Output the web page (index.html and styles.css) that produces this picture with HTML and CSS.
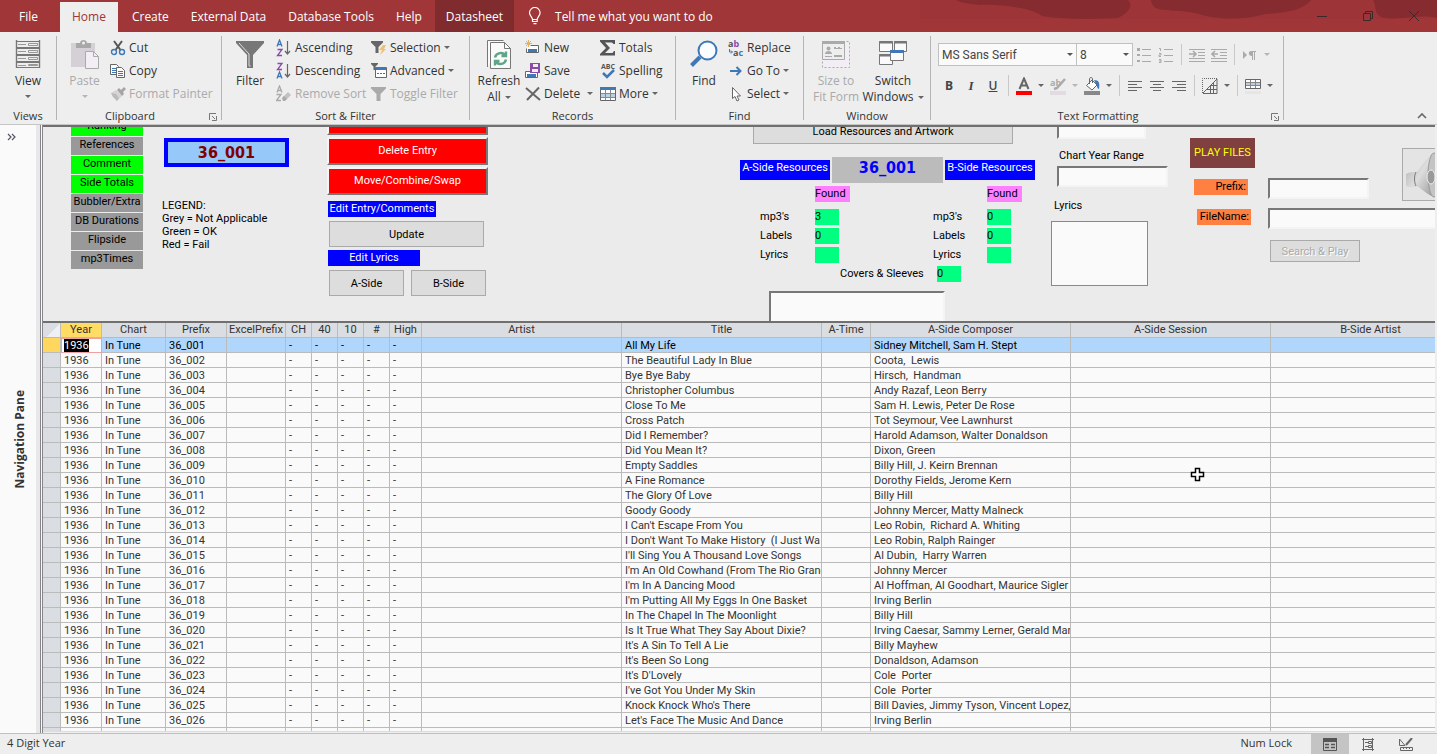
FILE: index.html
```html
<!DOCTYPE html>
<html lang="en">
<head>
<meta charset="UTF-8" />
<meta name="viewport" content="width=device-width, initial-scale=1" />
<title>Database - In Tune</title>
<link rel="stylesheet" href="styles.css">
</head>
<body>

<header class="titlebar">
  <svg class="swirls" width="517" height="32" viewBox="0 0 517 32">
    <rect width="517" height="19" fill="#98323a" opacity=".45"/>
    <g fill="#862b2f">
      <path d="M36 0h172c6 6 0 13-10 18-20 1-50 2-76-2C112 8 80 4 60 5 50 4 42 3 36 0z"/>
      <path d="M231 0h160c-6 8-20 13-46 14-20 6-48 6-66 0-16-4-20-2-32-4-12 0-16-5-16-10z"/>
      <path d="M453 0h64v18c-16-4-34 2-52 0-12-2-8-12-12-18z"/>
    </g>
  </svg>
  <nav class="tabs">
    <a href="#" class="tab file">File</a>
    <a href="#" class="tab active">Home</a>
    <a href="#" class="tab">Create</a>
    <a href="#" class="tab">External Data</a>
    <a href="#" class="tab">Database Tools</a>
    <a href="#" class="tab">Help</a>
    <a href="#" class="tab context">Datasheet</a>
  </nav>
  <button class="tellme">
    <svg width="14" height="18" viewBox="0 0 14 18" fill="none" stroke="#fff" stroke-width="1.2"><path d="M4.5 12.5C4.500 10 1.500 9 1.500 5.800a5.300 5.300 0 0 1 10.600 0C12.100 9 9.200 10 9.200 12.500zM4.500 12.500v2h4.700v-2M5.500 16.700h3"/></svg>
    Tell me what you want to do
  </button>
  <div class="winbtns">
    <button aria-label="Minimize"><svg width="12" height="12" viewBox="0 0 12 12"><path d="M1 6.500h10" stroke="#3a2a2b"/></svg></button>
    <button aria-label="Restore"><svg width="12" height="12" viewBox="0 0 12 12" fill="none" stroke="#3a2a2b"><path d="M1.500 3.500h7v7h-7zM3.500 3.500v-2h7v7h-2"/></svg></button>
    <button aria-label="Close"><svg width="12" height="12" viewBox="0 0 12 12"><path d="M1 1l10 10M11 1L1 11" stroke="#3a2a2b"/></svg></button>
  </div>
</header>

<section class="ribbon">
  <div class="group views">
    <div class="tools">
      <button class="big">
        <svg width="26" height="32" viewBox="0 0 26 32" fill="none" stroke="#777">
          <path d="M1.500 1v28M24.500 1v28" stroke-width="1.400"/>
          <path d="M1 2.500h24M1 8.500h24M1 9.500h24M1 15.500h24M1 16.500h24M1 22.500h24M1 23.500h24M1 28.500h24"/>
          <path d="M3 5.500h8M3 12.500h8M3 19.500h8M3 26.500h8M13.500 4.500h9v2h-9zM13.500 11.500h9v2h-9zM13.500 18.500h9v2h-9zM13.500 25.500h9v1h-9z" stroke="#999"/>
        </svg>
        <span>View</span><i class="caret"></i>
      </button>
    </div>
    <div class="caption">Views</div>
  </div>

  <div class="group clipboard">
    <div class="tools">
      <button class="big" disabled>
        <svg width="30" height="32" viewBox="0 0 30 32">
          <path d="M1 4h24v24H1z" fill="#d5d0d5"/>
          <path d="M6 4h4c0-4 7-4 7 0h4v5H6z" fill="#a8a8a8"/><circle cx="13.500" cy="4" r="1.500" fill="#eee"/>
          <path d="M15.500 12.500h8l5 5v12h-13z" fill="#f3eef5" stroke="#aaa"/><path d="M23.500 12.500v5h5" fill="none" stroke="#aaa"/>
        </svg>
        <span>Paste</span><i class="caret"></i>
      </button>
      <div class="stack">
        <button class="small">
          <svg width="16" height="16" viewBox="0 0 16 16" fill="none"><path d="M4 1l6.500 9M12 1L5.500 10" stroke="#555" stroke-width="2"/><circle cx="4" cy="12" r="2.500" stroke="#3f78b5" stroke-width="1.400"/><circle cx="12" cy="12" r="2.500" stroke="#3f78b5" stroke-width="1.400"/></svg>
          Cut
        </button>
        <button class="small">
          <svg width="16" height="16" viewBox="0 0 16 16" fill="#fafafa" stroke="#666"><path d="M.5 1.500h6l2 2v8h-8z"/><path d="M2 5.500h4M2 7.500h4M2 9.500h4" stroke="#3f78b5"/><path d="M6.500 4.500h5l3 3v7h-8z"/><path d="M8 8.500h5M8 10.500h5M8 12.500h5" stroke="#3f78b5"/></svg>
          Copy
        </button>
        <button class="small" disabled>
          <svg width="16" height="16" viewBox="0 0 16 16"><path d="M1 7l5-3 6 6-5 5z" fill="#d8d2d8"/><path d="M1 7l5 1 3 4-2 3-3-3-1-1z" fill="#bbb"/><path d="M7 4l2-2 2 2 3-3 2 2-3 3 1 2-2 2z" fill="#a5a5a5"/></svg>
          Format Painter
        </button>
      </div>
    </div>
    <div class="caption has-launcher">Clipboard <svg class="launcher" width="8" height="8" viewBox="0 0 8 8" fill="none" stroke="#777"><path d="M.5 7V.5H7M3 3l3 3M7.500 3v4.500H3"/></svg></div>
  </div>

  <div class="group sort">
    <div class="tools">
      <button class="big">
        <svg width="28" height="32" viewBox="0 0 28 32"><path d="M0 2h28v2L17 16v13h-6V16L0 4z" fill="#777"/><path d="M3 4l10 11v12h1.500" fill="none" stroke="#ddd"/></svg>
        <span>Filter</span>
      </button>
      <div class="stack wide">
        <button class="small">
          <svg width="16" height="18" viewBox="0 0 16 18" fill="none"><path d="M1 7.500L3.500 1 6 7.500M2 5.500h3" stroke="#3f78b5" stroke-width="1.300"/><path d="M1.500 10.500H6L1.500 16.500H6" stroke="#8b4aa8" stroke-width="1.300"/><path d="M11.500 2v12M9 12l2.500 3 2.500-3" stroke="#666" stroke-width="1.200"/></svg>
          Ascending
        </button>
        <button class="small">
          <svg width="16" height="18" viewBox="0 0 16 18" fill="none"><path d="M1 16.500L3.500 10 6 16.500M2 14.500h3" stroke="#3f78b5" stroke-width="1.300"/><path d="M1.500 1.500H6L1.500 7.500H6" stroke="#8b4aa8" stroke-width="1.300"/><path d="M11.500 2v12M9 12l2.500 3 2.500-3" stroke="#666" stroke-width="1.200"/></svg>
          Descending
        </button>
        <button class="small" disabled>
          <svg width="16" height="18" viewBox="0 0 16 18" fill="none"><path d="M1 7.500L3.500 1 6 7.500M2 5.500h3M.5 9.500H5L.5 15.500H5" stroke="#aaa" stroke-width="1.300"/><path d="M7 12l5-5 3 3-5 5H8z" fill="#c5c0c5"/><path d="M6 13l2-2 3 3-2 2H7z" fill="#aaa"/></svg>
          Remove Sort
        </button>
      </div>
      <div class="stack">
        <button class="small">
          <svg width="16" height="16" viewBox="0 0 16 16"><path d="M0 1h12v1.500L7.500 7v6h-3V7L0 2.500z" fill="#666"/><path d="M12 5h3l-2 4h2l-6 6 2-5H8z" fill="#f0c070"/></svg>
          Selection<i class="caret"></i>
        </button>
        <button class="small">
          <svg width="16" height="16" viewBox="0 0 16 16"><path d="M4.500 4.500h11v10h-11z" fill="#fff" stroke="#666"/><path d="M5 4h10v3H5z" fill="#3f78b5"/><path d="M6 10.500h2M9 10.500h2M12 10.500h2" stroke="#666"/><path d="M0 0h7v1L4.500 3.500V7h-2V3.500L0 1z" fill="#666"/></svg>
          Advanced<i class="caret"></i>
        </button>
        <button class="small" disabled>
          <svg width="16" height="16" viewBox="0 0 16 16"><path d="M0 1h15v1.500L9.500 8v7h-4V8L0 2.500z" fill="#aaa"/></svg>
          Toggle Filter
        </button>
      </div>
    </div>
    <div class="caption">Sort &amp; Filter</div>
  </div>

  <div class="group records">
    <div class="tools">
      <button class="big">
        <svg width="26" height="32" viewBox="0 0 26 32" fill="#fafafa" stroke="#777"><path d="M1.500 28V1.500h16"/><path d="M4.500 3.500h14l6 6v20h-20z"/><path d="M18.500 3.500v6h6" fill="none"/><path d="M9 18.500c1-5 8-6 10-2M20 12.500v4.500h-4.500M20 20.500c-1 5-8 6-10 2M9 26.500V22h4.500" fill="none" stroke="#5fa588" stroke-width="2.400"/></svg>
        <span>Refresh</span><span>All<i class="caret"></i></span>
      </button>
      <div class="stack mid">
        <button class="small">
          <svg width="16" height="16" viewBox="0 0 16 16" fill="none"><path d="M5.500 5.500h8v7h-12v-4" stroke="#666" fill="#fff"/><path d="M3 9h9v3H3z" fill="#3f78b5"/><path d="M3.500 0v7M0 3.500h7M1 1l5 5M6 1L1 6" stroke="#e8b060"/></svg>
          New
        </button>
        <button class="small">
          <svg width="16" height="16" viewBox="0 0 16 16" fill="none"><path d="M.5 8.500h12v6H.5z" fill="#fff" stroke="#666"/><path d="M2 11h9v3H2z" fill="#3f78b5"/><path d="M5 0h10v10H5z" fill="#8b4aa8"/><path d="M8 1h5v3H8zM7 6h6v3H7z" fill="#eee"/></svg>
          Save
        </button>
        <button class="small">
          <svg width="16" height="16" viewBox="0 0 16 16"><path d="M1 2l14 12M14 1.500L2 14" stroke="#666" stroke-width="2"/></svg>
          Delete<i class="caret far"></i>
        </button>
      </div>
      <div class="stack">
        <button class="small">
          <svg width="16" height="16" viewBox="0 0 16 16"><path d="M0 0h15v4h-1.500L12 2.500H5L10 8l-5 5h7.500L14 11h1v4.500H0V14l6-6L0 1.500z" fill="#555"/></svg>
          Totals
        </button>
        <button class="small">
          <svg width="16" height="18" viewBox="0 0 16 18" fill="none"><text x="1" y="7" class="abc">ABC</text><path d="M3 11l4 4 7-7" stroke="#3f78b5" stroke-width="2.500"/></svg>
          Spelling
        </button>
        <button class="small">
          <svg width="16" height="16" viewBox="0 0 16 16"><path d="M.5 1.500h15v13H.5z" fill="#fff" stroke="#666"/><path d="M0 1h16v3H0z" fill="#3f78b5"/><path d="M1 8h14v3H1z" fill="#b8cfe6"/><path d="M5.500 4v10M10.500 4v10M1 7.500h14M1 11.500h14" stroke="#888"/></svg>
          More<i class="caret"></i>
        </button>
      </div>
    </div>
    <div class="caption">Records</div>
  </div>

  <div class="group find">
    <div class="tools">
      <button class="big">
        <svg width="28" height="32" viewBox="0 0 28 32" fill="none"><path d="M1.500 26.500L10 18" stroke="#3f78b5" stroke-width="4"/><circle cx="17.500" cy="11.500" r="9" fill="#fafcff" stroke="#3f78b5" stroke-width="2"/></svg>
        <span>Find</span>
      </button>
      <div class="stack">
        <button class="small">
          <svg width="16" height="20" viewBox="0 0 16 20"><text x="0" y="9" class="abc big-abc">a<tspan fill="#8b4aa8">b</tspan></text><text x="5" y="18" class="abc big-abc">a<tspan fill="#3f78b5">c</tspan></text><path d="M1.500 11v3H4M3 12.500L4.500 14 3 15.500" fill="none" stroke="#3f78b5"/></svg>
          Replace
        </button>
        <button class="small">
          <svg width="16" height="16" viewBox="0 0 16 16" fill="none" stroke="#3f78b5" stroke-width="2"><path d="M2 8h10M8.500 4l4 4-4 4"/></svg>
          Go To<i class="caret"></i>
        </button>
        <button class="small">
          <svg width="16" height="16" viewBox="0 0 16 16"><path d="M4.500 1.500v11l2.500-2 2 4.500 2-1-2-4h3.500z" fill="#fff" stroke="#666"/></svg>
          Select<i class="caret"></i>
        </button>
      </div>
    </div>
    <div class="caption">Find</div>
  </div>

  <div class="group window">
    <div class="tools">
      <button class="big" disabled>
        <svg width="28" height="32" viewBox="0 0 28 32" fill="none"><path d="M.5 2.500h27v26H.5z" fill="#f3eef5" stroke="#aaa" stroke-dasharray="2 2"/><path d="M.5 2.500h22v18H.5z" fill="#eee" stroke="#aaa"/><path d="M0 2h23v3H0z" fill="#aaa"/><circle cx="6.500" cy="9.500" r="2" fill="#aaa"/><path d="M3 15c0-4 7-4 7 0zM12 8h2v1h2V8h2v1h2v1h-8zM3 17h7v1H3zM12 16h8v2h-8z" fill="#aaa"/></svg>
        <span>Size to</span><span>Fit Form</span>
      </button>
      <button class="big">
        <svg width="30" height="32" viewBox="0 0 30 32" fill="#fafafa" stroke="#777"><path d="M1.500 2.500h13v10h-13zM16.500 2.500h12v10h-12zM1.500 15.500h13v10h-13z"/><path d="M1 3.500h14M16 3.500h13M1 16.500h14" stroke-width="2"/><path d="M12.500 11.500h13v10h-13z"/><path d="M12 12.500h14" stroke="#3f78b5" stroke-width="3"/></svg>
        <span>Switch</span><span>Windows<i class="caret"></i></span>
      </button>
    </div>
    <div class="caption">Window</div>
  </div>

  <div class="group format">
    <div class="tools rows">
      <div class="row">
        <span class="pick face"><select aria-label="Font"><option>MS Sans Serif</option></select></span>
        <span class="pick size"><select aria-label="Font size"><option>8</option></select></span>
        <button class="icon" disabled aria-label="Bullets"><svg width="16" height="16" viewBox="0 0 16 16"><path d="M1 1h3v3H1zM1 7h3v2H1zM1 13h3v2H1z" fill="#aaa"/><path d="M6 2.500h9M6 8.500h9M6 14.500h9" stroke="#aaa"/></svg></button>
        <button class="icon" disabled aria-label="Numbering"><svg width="16" height="16" viewBox="0 0 16 16" fill="none" stroke="#aaa"><path d="M1 1.500h1.500V4M1 6.500h2V8H1v1.500h2M1 12.500h2v3H1M1 14h2M6 2.500h9M6 8.500h9M6 14.500h9"/></svg></button>
        <i class="sep"></i>
        <button class="icon" disabled aria-label="Increase indent"><svg width="16" height="16" viewBox="0 0 16 16" fill="none" stroke="#aaa"><path d="M0 2.500h16M9 5.500h7M9 8.500h7M0 11.500h16M0 14.500h16"/><path d="M0 7h6M4 4l3 3-3 3" stroke-width="1.600"/></svg></button>
        <button class="icon" disabled aria-label="Decrease indent"><svg width="16" height="16" viewBox="0 0 16 16" fill="none" stroke="#aaa"><path d="M0 2.500h16M9 5.500h7M9 8.500h7M0 11.500h16M0 14.500h16"/><path d="M1 7h6M4 4L1 7l3 3" stroke-width="1.600"/></svg></button>
        <i class="sep"></i>
        <button class="icon" disabled aria-label="Text direction"><svg width="16" height="16" viewBox="0 0 16 16"><path d="M1 4l4 4-4 4z" fill="#aaa"/><path d="M7 4h7v1h-1v8h-1V5h-1v8h-1V9C6 9 6 4 9 4z" fill="#aaa"/></svg></button>
        <button class="drop" disabled aria-label="Text direction options"><i class="caret"></i></button>
      </div>
      <div class="row">
        <button class="icon bold">B</button>
        <button class="icon italic">I</button>
        <button class="icon under">U</button>
        <i class="sep"></i>
        <button class="icon" aria-label="Font color"><svg width="16" height="18" viewBox="0 0 16 18"><path d="M3.500 12L8 1.500 12.500 12M5 8.500h6" fill="none" stroke="#666" stroke-width="2"/><path d="M0 14h16v4H0z" fill="#f00"/></svg></button>
        <button class="drop" aria-label="Font color options"><i class="caret"></i></button>
        <button class="icon" disabled aria-label="Highlight"><svg width="16" height="18" viewBox="0 0 16 18"><text x="0" y="9" class="abc big-abc off">ab</text><path d="M15 2L7 11l-3 1" stroke="#aaa" stroke-width="2.500" fill="none"/><path d="M0 14h16v4H0z" fill="#e2dce2"/></svg></button>
        <button class="drop" disabled aria-label="Highlight options"><i class="caret"></i></button>
        <button class="icon" aria-label="Background color"><svg width="16" height="18" viewBox="0 0 16 18"><path d="M2.500 8.500L8 3l5 5-5 5z" fill="#fff" stroke="#666"/><path d="M5.500 7V2c0-2 3-2 3 0v4" fill="none" stroke="#666"/><path d="M10 3c5 0 6 3 5 9-3-1-1-4-3-5z" fill="#3f78b5"/><path d="M0 14h16v4H0z" fill="#888"/></svg></button>
        <button class="drop" aria-label="Background color options"><i class="caret"></i></button>
        <i class="sep"></i>
        <button class="icon" aria-label="Align left"><svg width="16" height="16" viewBox="0 0 16 16" stroke="#666"><path d="M1 3.500h14M1 6.500h9M1 9.500h14M1 12.500h9"/></svg></button>
        <button class="icon" aria-label="Center"><svg width="16" height="16" viewBox="0 0 16 16" stroke="#666"><path d="M1 3.500h14M4 6.500h8M1 9.500h14M4 12.500h8"/></svg></button>
        <button class="icon" aria-label="Align right"><svg width="16" height="16" viewBox="0 0 16 16" stroke="#666"><path d="M1 3.500h14M6 6.500h9M1 9.500h14M6 12.500h9"/></svg></button>
        <i class="sep"></i>
        <button class="icon" aria-label="Gridlines"><svg width="16" height="16" viewBox="0 0 16 16" fill="none" stroke="#666"><path d="M.5 15V.5H15" stroke-dasharray="1 1"/><path d="M1 15L15 1v14.500H1M5 11.500h10M8.500 8v7M11.500 5v10M8 7.500h7"/></svg></button>
        <button class="drop" aria-label="Gridline options"><i class="caret"></i></button>
        <i class="sep"></i>
        <button class="icon" aria-label="Alternate row color"><svg width="16" height="18" viewBox="0 0 16 18" fill="none"><path d="M.5 2.500h15v9H.5z" fill="#fff" stroke="#666"/><path d="M1 6h14v3H1z" fill="#b8cfe6"/><path d="M5.500 3v8M10.500 3v8M1 5.500h14M1 8.500h14" stroke="#888"/><path d="M0 14h16v3H0z" fill="#e6e6e6"/></svg></button>
        <button class="drop" aria-label="Alternate row color options"><i class="caret"></i></button>
      </div>
    </div>
    <div class="caption has-launcher">Text Formatting <svg class="launcher" width="8" height="8" viewBox="0 0 8 8" fill="none" stroke="#777"><path d="M.5 7V.5H7M3 3l3 3M7.500 3v4.500H3"/></svg></div>
  </div>
  <button class="collapse" aria-label="Collapse ribbon"><svg width="10" height="6" viewBox="0 0 10 6"><path d="M1 5l4-4 4 4" fill="none" stroke="#666" stroke-width="1.600"/></svg></button>
</section>

<div class="workspace">
  <aside class="navpane">
    <button aria-label="Open navigation pane"><svg width="9" height="8" viewBox="0 0 9 8" fill="none" stroke="#556" stroke-width="1.200"><path d="M1 1l3 3-3 3M5 1l3 3-3 3"/></svg></button>
    <div class="navtitle">Navigation Pane</div>
  </aside>

  <main>
    <section class="form">
      <div class="canvas">
        <div class="checks">
          <span class="ok">Ranking</span>
          <span>References</span>
          <span class="ok">Comment</span>
          <span class="ok">Side Totals</span>
          <span>Bubbler/Extra</span>
          <span>DB Durations</span>
          <span>Flipside</span>
          <span>mp3Times</span>
        </div>

        <div class="current">
          <div class="prefix">36_001</div>
          <div class="legend">LEGEND:<br>Grey = Not Applicable<br>Green = OK<br>Red = Fail</div>
        </div>

        <div class="edit">
          <button class="danger" aria-label="Add Entry"></button>
          <button class="danger">Delete Entry</button>
          <button class="danger">Move/Combine/Swap</button>
          <div class="tag">Edit Entry/Comments</div>
          <button class="btn">Update</button>
          <div class="tag lyr">Edit Lyrics</div>
          <div class="pair">
            <button class="btn">A-Side</button>
            <button class="btn">B-Side</button>
          </div>
        </div>

        <div class="resources">
          <button class="btn load">Load Resources and Artwork</button>
          <div class="heads">
            <span class="side">A-Side Resources</span>
            <span class="num">36_001</span>
            <span class="side">B-Side Resources</span>
          </div>
          <div class="counts">
            <div class="count-grid">
              <span></span><b class="found">Found</b>
              <span>mp3's</span><b>3</b>
              <span>Labels</span><b>0</b>
              <span>Lyrics</span><b></b>
            </div>
            <div class="count-grid">
              <span></span><b class="found">Found</b>
              <span>mp3's</span><b>0</b>
              <span>Labels</span><b>0</b>
              <span>Lyrics</span><b></b>
            </div>
          </div>
          <div class="covers"><span>Covers &amp; Sleeves</span><b>0</b></div>
          <textarea class="sunken notes" aria-label="Notes"></textarea>
        </div>

        <div class="lookup">
          <input type="text" class="sunken year" aria-label="Chart year">
          <label for="range">Chart Year Range</label>
          <input type="text" class="sunken" id="range">
          <label for="lyrics" class="lyrics-label">Lyrics</label>
          <textarea id="lyrics"></textarea>
        </div>

        <div class="player">
          <div class="play">PLAY FILES</div>
          <div class="field"><label for="pfx">Prefix:</label><input type="text" class="sunken" id="pfx"></div>
          <div class="field name"><label for="fname">FileName:</label><input type="text" class="sunken" id="fname"></div>
          <button class="btn search" disabled>Search &amp; Play</button>
          <button class="speaker" aria-label="Play sound">
            <svg width="50" height="51" viewBox="0 0 50 51">
              <defs><linearGradient id="cone" x1="0" y1="0" x2="1" y2="1"><stop offset="0" stop-color="#aaa"/><stop offset=".5" stop-color="#ddd"/><stop offset="1" stop-color="#999"/></linearGradient></defs>
              <path d="M3 25c3-2 8-2 11-2 5-6 9-14 17-19v44c-6-2-11-7-17-11-4 2-8 1-11 0z" fill="url(#cone)"/>
              <path d="M13 23c-2 4-2 10 0 14" fill="none" stroke="#777"/>
              <ellipse cx="31" cy="26" rx="6" ry="22" fill="#c4c4c4" stroke="#999"/><ellipse cx="28" cy="28" rx="4" ry="7" fill="#999" stroke="#eee"/>
            </svg>
          </button>
        </div>
      </div>
    </section>

    <section class="sheet">
      <table id="songs">
        <colgroup>
          <col class="c-sel"><col class="c-year"><col class="c-chart"><col class="c-prefix"><col class="c-excel">
          <col class="c-flag"><col class="c-flag"><col class="c-flag"><col class="c-flag"><col class="c-high">
          <col class="c-wide"><col class="c-wide"><col class="c-time"><col class="c-wide"><col class="c-wide"><col class="c-wide">
        </colgroup>
        <thead>
          <tr>
            <th class="corner"></th><th class="sorted">Year</th><th>Chart</th><th>Prefix</th><th>ExcelPrefix</th>
            <th>CH</th><th>40</th><th>10</th><th>#</th><th>High</th>
            <th>Artist</th><th>Title</th><th>A-Time</th><th>A-Side Composer</th><th>A-Side Session</th><th>B-Side Artist</th>
          </tr>
        </thead>
        <tbody></tbody>
      </table>
    </section>
  </main>
</div>

<footer class="status">
  <span>4 Digit Year</span>
  <span class="numlock">Num Lock</span>
  <button class="on" aria-label="Form view"><svg width="14" height="13" viewBox="0 0 14 13"><path d="M.5.500h13v12H.5z" fill="none" stroke="#555"/><path d="M0 0h14v4H0z" fill="#555"/><path d="M2 6.500h4M8 6.500h4M2 9.500h4M8 9.500h4" stroke="#555" stroke-width="1.500"/></svg></button>
  <button aria-label="Layout view"><svg width="14" height="13" viewBox="0 0 14 13" fill="none" stroke="#666"><path d="M2.500 0v13M11.500 0v13M1 1.500h12M1 11.500h12M4 4.500h3M4 8.500h3M7.500 3.500h3v2h-3zM7.500 7.500h3v2h-3z"/></svg></button>
  <button aria-label="Design view"><svg width="14" height="13" viewBox="0 0 14 13" fill="none" stroke="#666"><path d="M.5 1v6.500H6zM1.500 9.500h12v3h-12zM4.500 10v1M7.500 10v1M10.500 10v1"/><path d="M13 0L7 7" stroke-width="2"/></svg></button>
</footer>

<svg class="pointer" width="15" height="15" viewBox="0 0 15 15"><path d="M5.500 1.500h4v4h4v4h-4v4h-4v-4h-4v-4h4z" fill="#fff" stroke="#000" stroke-width="1.500"/></svg>

<script>
  const songs = [
    ['All My Life', 'Sidney Mitchell, Sam H. Stept'],
    ['The Beautiful Lady In Blue', 'Coota,  Lewis'],
    ['Bye Bye Baby', 'Hirsch,  Handman'],
    ['Christopher Columbus', 'Andy Razaf, Leon Berry'],
    ['Close To Me', 'Sam H. Lewis, Peter De Rose'],
    ['Cross Patch', 'Tot Seymour, Vee Lawnhurst'],
    ['Did I Remember?', 'Harold Adamson, Walter Donaldson'],
    ['Did You Mean It?', 'Dixon, Green'],
    ['Empty Saddles', 'Billy Hill, J. Keirn Brennan'],
    ['A Fine Romance', 'Dorothy Fields, Jerome Kern'],
    ['The Glory Of Love', 'Billy Hill'],
    ['Goody Goody', 'Johnny Mercer, Matty Malneck'],
    ["I Can't Escape From You", 'Leo Robin,  Richard A. Whiting'],
    ["I Don't Want To Make History  (I Just Wa", 'Leo Robin, Ralph Rainger'],
    ["I'll Sing You A Thousand Love Songs", 'Al Dubin,  Harry Warren'],
    ["I'm An Old Cowhand (From The Rio Grand", 'Johnny Mercer'],
    ["I'm In A Dancing Mood", 'Al Hoffman, Al Goodhart, Maurice Sigler'],
    ["I'm Putting All My Eggs In One Basket", 'Irving Berlin'],
    ['In The Chapel In The Moonlight', 'Billy Hill'],
    ['Is It True What They Say About Dixie?', 'Irving Caesar, Sammy Lerner, Gerald Marl'],
    ["It's A Sin To Tell A Lie", 'Billy Mayhew'],
    ["It's Been So Long", 'Donaldson, Adamson'],
    ["It's D'Lovely", 'Cole  Porter'],
    ["I've Got You Under My Skin", 'Cole  Porter'],
    ["Knock Knock Who's There", 'Bill Davies, Jimmy Tyson, Vincent Lopez,'],
    ["Let's Face The Music And Dance", 'Irving Berlin'],
    ['', '']
  ];

  const tbody = document.querySelector('#songs tbody');

  songs.forEach((song, i) => {
    const tr = document.createElement('tr');
    if (i === 0) tr.className = 'current-row';
    const filled = song[0] !== '';
    const no = String(i + 1).padStart(3, '0');
    const dash = filled ? '-' : '';
    const year = i === 0 ? '<mark>1936</mark>' : (filled ? '1936' : '');
    tr.innerHTML = `
      <td class="selector"></td>
      <td class="year">${year}</td>
      <td>${filled ? 'In Tune' : ''}</td>
      <td>${filled ? '36_' + no : ''}</td>
      <td></td>
      <td>${dash}</td><td>${dash}</td><td>${dash}</td><td>${dash}</td><td>${dash}</td>
      <td></td>
      <td>${song[0]}</td>
      <td></td>
      <td>${song[1]}</td>
      <td></td>
      <td></td>
    `;
    tbody.appendChild(tr);
  });
</script>

</body>
</html>
```
FILE: styles.css
```css
* { box-sizing: border-box; }
body {
  margin: 0;
  height: 100vh;
  display: flex;
  flex-direction: column;
  overflow: hidden;
  background: #eee;
  color: #333;
  font-family: "Open Sans", "Noto Sans", sans-serif;
  font-size: 12px;
}
button {
  font: inherit;
  color: inherit;
  background: none;
  border: none;
  padding: 0;
}
button:disabled { color: #aaa; }
svg { flex: none; display: block; }

/* title bar */
.titlebar {
  position: relative;
  display: flex;
  flex: none;
  height: 32px;
  background: #a03638;
  color: #fff;
}
.swirls {
  position: absolute;
  right: 0;
  top: 0;
}
.tabs { display: flex; padding-top: 2px; }
.tab {
  padding: 0 11px;
  line-height: 30px;
  color: #fff;
  text-decoration: none;
}
.tab.file { width: 60px; padding-left: 19px; }
.tab.active { background: #eee; color: #a03638; padding: 0 12px; margin-right: 3px; }
.tab.context { background: #802b2e; margin: -2px 0 0 2px; padding-top: 2px; }
.tellme {
  display: flex;
  align-items: center;
  gap: 13px;
  padding-left: 14px;
}
.winbtns {
  position: relative;
  display: flex;
  margin-left: auto;
}
.winbtns button { width: 46px; display: grid; place-items: center; }

/* ribbon */
.ribbon {
  display: flex;
  flex: none;
  height: 93px;
  padding-top: 4px;
  border-bottom: 1px solid #c6c6c6;
}
.group {
  flex: none;
  display: flex;
  flex-direction: column;
  height: 84px;
  border-right: 1px solid #b4b4b4;
}
.views { width: 57px; }
.clipboard { width: 165px; }
.sort { width: 248px; }
.records { width: 206px; }
.find { width: 128px; }
.window { width: 127px; }
.format { width: 353px; }
.tools {
  flex: none;
  display: flex;
  height: 72px;
}
.caption {
  display: flex;
  justify-content: center;
  line-height: 16px;
  font-size: 11px;
  position: relative;
}
.has-launcher { padding-right: 18px; }
.launcher { position: absolute; right: 4px; top: 5px; }
.big {
  width: 56px;
  display: flex;
  flex-direction: column;
  align-items: center;
  padding-top: 3px;
  line-height: 16px;
  white-space: nowrap;
}
.big svg { margin-bottom: 2px; }
.big > .caret { margin: 6px 0 0; }
.caret {
  display: inline-block;
  border: 3px solid transparent;
  border-top-color: #666;
  border-bottom: none;
  margin-left: 4px;
  vertical-align: 2px;
}
button:disabled .caret { border-top-color: #b5b5b5; }
.stack { display: flex; flex-direction: column; }
.small {
  height: 23px;
  display: flex;
  align-items: center;
  gap: 3px;
  white-space: nowrap;
}
.small .caret { margin-left: 0; }
.small .caret.far { margin-left: 4px; }
.clipboard .big { margin-left: 2px; width: 51px; }
.sort .big { width: 54px; padding-left: 2px; }
.sort .wide { width: 95px; }
.records .mid { width: 75px; }
.records .big { width: 55px; padding-left: 3px; }
.find .big { width: 52px; padding-left: 4px; }
.window .big { width: 64px; }
.window .big + .big { width: 50px; }
.abc { font: bold 7px "Open Sans", sans-serif; fill: #555; }
.big-abc { font-size: 9px; }
.off { fill: #aaa; }
.rows { flex-direction: column; padding: 7px 0 0 7px; gap: 8px; }
.row { display: flex; align-items: center; height: 23px; }
.pick { position: relative; height: 23px; }
.pick.face { width: 139px; }
.pick.size { width: 56px; }
.pick select {
  appearance: none;
  width: 100%;
  height: 100%;
  padding: 0 3px;
  border: 1px solid #c0c0c0;
  border-radius: 0;
  background: #fafafa;
  font: 12px Roboto, sans-serif;
  color: #444;
}
.pick.size select { border-left: none; }
.pick::after {
  content: "";
  position: absolute;
  right: 4px;
  top: 10px;
  border: 3px solid transparent;
  border-top-color: #555;
  border-bottom: none;
}
.icon { width: 22px; height: 22px; display: grid; place-items: center; color: #444; }
.drop { width: 12px; height: 22px; display: grid; place-items: center; }
.drop .caret { margin: 0; }
.sep { width: 9px; height: 21px; display: flex; justify-content: center; }
.sep::before { content: ""; width: 1px; background: #c8c8c8; }
.bold { font-weight: 700; }
.italic { font: italic bold 13px "Liberation Serif", serif; }
.under { font-weight: 600; text-decoration: underline; }
.collapse { margin: auto 10px 5px auto; }

/* workspace */
.workspace { display: flex; flex: 1; min-height: 0; }
.navpane {
  flex: none;
  width: 43px;
  display: flex;
  flex-direction: column;
  background: #fafafa;
  border-right: 3px double #85858a;
  box-shadow: inset -4px 0 #e8e8ea;
}
.navpane button { padding: 8px 0 0 7px; width: 24px; }
.navtitle {
  margin: auto;
  padding-bottom: 5px;
  writing-mode: vertical-rl;
  transform: rotate(180deg);
  font-weight: 700;
  font-size: 12px;
  line-height: 16px;
}
main {
  flex: 1;
  min-width: 0;
  display: flex;
  flex-direction: column;
  margin-right: 2px;
  border-top: 2px solid #707070;
}

/* form header */
.form {
  flex: none;
  height: 196px;
  overflow: hidden;
  background: #ebebeb;
  border-bottom: 2px solid #707070;
  font-family: Roboto, "Open Sans", sans-serif;
  font-size: 11px;
  line-height: 13px;
  color: #000;
}
/* scrolled down a little, the top row is cut */
.canvas {
  display: flex;
  align-items: flex-start;
  margin-top: -20px;
  padding-left: 28px;
  white-space: nowrap;
}
.canvas > div { flex: none; display: flex; flex-direction: column; }
.canvas b { font-weight: 400; }
.checks { width: 72px; padding-top: 11px; gap: 1px; }
.checks span { height: 18px; line-height: 16px; background: #999; text-align: center; }
.checks .ok { background: #0f0; }
.current { width: 127px; margin-left: 19px; padding-top: 31px; }
.prefix {
  height: 29px;
  margin-left: 2px;
  border: 4px solid #00f;
  background: #96c8fa;
  color: #800000;
  font-family: "DejaVu Sans Condensed", "DejaVu Sans", sans-serif;
  font-size: 16px;
  font-weight: 700;
  line-height: 21px;
  text-align: center;
}
.legend { margin-top: 32px; }
.edit { width: 161px; margin-left: 38px; }
.danger {
  height: 28px;
  margin-bottom: 2px;
  padding-bottom: 2px;
  background: #f00;
  color: #fff;
  border: 2px solid;
  border-color: #f4f4f4 #777 #777 #f4f4f4;
}
.tag {
  width: 108px;
  height: 16px;
  margin: 4px 0 4px 1px;
  line-height: 15px;
  background: #00f;
  color: #fff;
  text-align: center;
}
.tag.lyr { width: 92px; margin: 3px 0 4px 1px; }
.btn {
  height: 26px;
  background: #ddd;
  border: 1px solid #aaa;
}
.edit .btn { margin-left: 2px; width: 155px; }
.edit .pair { display: flex; gap: 5px; }
.edit .pair .btn { width: 75px; }
.resources { width: 295px; margin-left: 252px; padding-top: 11px; }
.load { width: 260px; margin-left: 13px; }
.heads { display: flex; align-items: center; gap: 2px; margin-top: 13px; }
.side {
  width: 90px;
  height: 20px;
  line-height: 15px;
  background: #00f;
  color: #fff;
  text-align: center;
}
.num {
  flex: 1;
  height: 26px;
  line-height: 21px;
  background: #bbb;
  color: #00f;
  font-family: "DejaVu Sans Condensed", "DejaVu Sans", sans-serif;
  font-size: 16px;
  font-weight: 700;
  text-align: center;
}
.counts { display: flex; justify-content: space-between; margin: 3px 13px 0 20px; }
.count-grid {
  display: grid;
  grid-template-columns: 55px 35px;
  row-gap: 3px;
}
.count-grid + .count-grid { grid-template-columns: 54px 35px; }
.count-grid > *, .covers > * { height: 16px; line-height: 15px; }
.count-grid b, .covers b { width: 24px; background: #00ff80; }
.count-grid .found { width: 35px; margin-bottom: 4px; background: #ff80ff; }
.covers { display: flex; margin: 3px 0 0 100px; }
.covers span { width: 97px; }
.sunken {
  height: 21px;
  padding: 0;
  background: #fafafa;
  border: 2px solid;
  border-color: #777 #f4f4f4 #f4f4f4 #777;
  border-radius: 0;
}
.notes { width: 176px; height: 40px; margin: 9px 0 0 29px; resize: none; }
.lookup { width: 117px; margin-left: 16px; padding-top: 11px; }
.lookup input { width: 111px; margin-left: 6px; }
.lookup .year { width: 89px; }
.lookup label { margin: 10px 0 4px 8px; }
.lookup .lyrics-label { margin: 12px 0 9px 3px; }
.lookup textarea#lyrics { width: 97px; height: 65px; resize: none; background: #fafafa; border: 1px solid #888890; }
.player { width: 278px; margin-left: 22px; padding-top: 31px; position: relative; }
.play {
  width: 65px;
  height: 30px;
  line-height: 30px;
  background: #804040;
  color: #ff0;
  text-align: center;
}
.field { display: flex; margin: 10px 0 0 4px; gap: 20px; }
.field label {
  width: 54px;
  height: 16px;
  margin-top: 1px;
  line-height: 15px;
  padding-right: 2px;
  background: #ff8040;
  text-align: right;
}
.field input { width: 101px; }
.field.name { margin: 9px 0 0 7px; gap: 17px; }
.field.name input { width: 190px; }
.search { width: 90px; height: 22px; margin: 11px 0 0 80px; text-shadow: 1px 1px #fff; }
/* sits over the right end of the fields */
.speaker {
  position: absolute;
  left: 212px;
  top: 41px;
  border: 1px solid #aaa;
  background: #e4e4e4;
}

/* datasheet */
.sheet {
  flex: 1;
  min-height: 0;
  overflow: hidden;
  background: #fafafa;
  border-bottom: 1px solid #ddd;
  margin-bottom: 1px;
  font-family: Roboto, "Liberation Sans", sans-serif;
  font-size: 11px;
}
table {
  width: 1428px;
  table-layout: fixed;
  border-collapse: separate;
  border-spacing: 0;
}
.c-sel { width: 18px; }
.c-year { width: 41px; }
.c-chart { width: 64px; }
.c-prefix { width: 61px; }
.c-excel { width: 59px; }
.c-flag { width: 26px; }
.c-high { width: 32px; }
.c-time { width: 49px; }
.c-wide { width: 200px; }
th, td {
  height: 15px;
  padding: 2px 0 0 3px;
  line-height: 12px;
  border-right: 1px solid #bbb;
  border-bottom: 1px solid #bbb;
  overflow: hidden;
  white-space: pre;
}
th {
  padding: 0;
  line-height: 14px;
  background: #dadde2;
  font-weight: 400;
  text-align: center;
}
th.sorted { background: #ffdc64; }
th.corner { background: linear-gradient(135deg, #dadde2 55%, #eef0f4 55%); }
.selector { background: #dadde2; }
.current-row td { background: #b1d6fb; color: #000; }
.current-row .selector { background: #ffd75e; }
.current-row .year { background: #fff; border: 1px solid #f0a0a0; padding: 1px 0 0 2px; }
mark { background: #000; color: #fff; }

/* status bar */
.status {
  flex: none;
  display: flex;
  align-items: center;
  height: 21px;
  padding: 0 12px 0 7px;
  border-top: 1px solid #c0c0c0;
  font-size: 11px;
  line-height: 14px;
}
.status span { padding-bottom: 2px; }
.numlock { margin: 0 19px 0 auto; }
.status button { width: 38px; height: 20px; display: grid; place-items: center; }
.status .on { background: #c4c4c4; }

.pointer {
  position: absolute;
  left: 1190px;
  top: 467px;
}
```
